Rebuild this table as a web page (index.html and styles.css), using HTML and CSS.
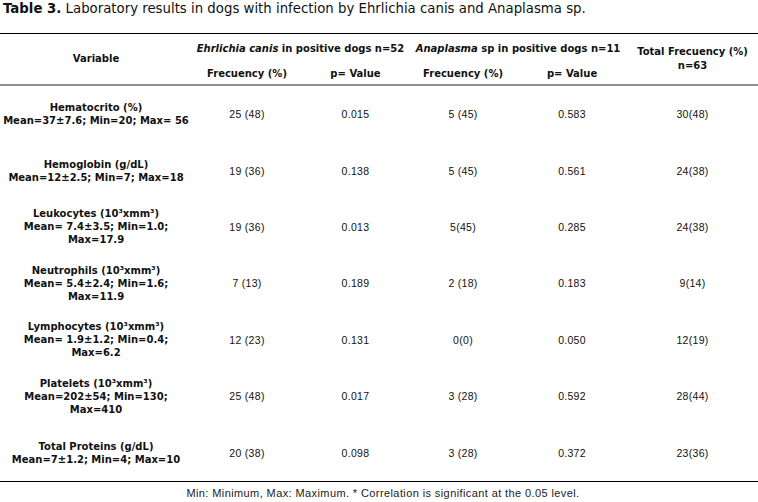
FILE: index.html
```html
<!DOCTYPE html>
<html lang="en">
<head>
<meta charset="utf-8">
<title>Table 3</title>
<link rel="stylesheet" href="styles.css">
</head>
<body>
<p class="title"><b>Table 3.</b> Laboratory results in dogs with infection by Ehrlichia canis and Anaplasma sp.</p>
<table class="results">
  <colgroup>
    <col class="c-var"><col class="c-f1"><col class="c-p1"><col class="c-f2"><col class="c-p2"><col class="c-tot">
  </colgroup>
  <thead>
    <tr class="h1">
      <th rowspan="2" class="var-head">Variable</th>
      <th colspan="2"><i>Ehrlichia canis</i> in positive dogs n=52</th>
      <th colspan="2"><i>Anaplasma</i> sp in positive dogs n=11</th>
      <th rowspan="2" class="tot-head">Total Frecuency (%)<br>n=63</th>
    </tr>
    <tr class="h2">
      <th>Frecuency (%)</th>
      <th>p= Value</th>
      <th>Frecuency (%)</th>
      <th>p= Value</th>
    </tr>
  </thead>
  <tbody>
    <tr>
      <td class="label">Hematocrito (%)<br>Mean=37±7.6; Min=20; Max= 56</td>
      <td>25 (48)</td><td>0.015</td><td>5 (45)</td><td>0.583</td><td>30(48)</td>
    </tr>
    <tr>
      <td class="label">Hemoglobin (g/dL)<br>Mean=12±2.5; Min=7; Max=18</td>
      <td>19 (36)</td><td>0.138</td><td>5 (45)</td><td>0.561</td><td>24(38)</td>
    </tr>
    <tr>
      <td class="label">Leukocytes (10³xmm³)<br>Mean= 7.4±3.5; Min=1.0;<br>Max=17.9</td>
      <td>19 (36)</td><td>0.013</td><td>5(45)</td><td>0.285</td><td>24(38)</td>
    </tr>
    <tr>
      <td class="label">Neutrophils (10³xmm³)<br>Mean= 5.4±2.4; Min=1.6;<br>Max=11.9</td>
      <td>7 (13)</td><td>0.189</td><td>2 (18)</td><td>0.183</td><td>9(14)</td>
    </tr>
    <tr>
      <td class="label">Lymphocytes (10³xmm³)<br>Mean= 1.9±1.2; Min=0.4;<br>Max=6.2</td>
      <td>12 (23)</td><td>0.131</td><td>0(0)</td><td>0.050</td><td>12(19)</td>
    </tr>
    <tr>
      <td class="label">Platelets (10³xmm³)<br>Mean=202±54; Min=130;<br>Max=410</td>
      <td>25 (48)</td><td>0.017</td><td>3 (28)</td><td>0.592</td><td>28(44)</td>
    </tr>
    <tr>
      <td class="label">Total Proteins (g/dL)<br>Mean=7±1.2; Min=4; Max=10</td>
      <td>20 (38)</td><td>0.098</td><td>3 (28)</td><td>0.372</td><td>23(36)</td>
    </tr>
  </tbody>
</table>
<p class="foot">Min: Minimum, Max: Maximum. * Correlation is significant at the 0.05 level.</p>
</body>
</html>
```

FILE: styles.css
```css
html, body {
  margin: 0;
  padding: 0;
  background: #fff;
  color: #000;
  font-family: "DejaVu Sans", Verdana, sans-serif;
}

.title {
  margin: 0;
  padding: 0 0 0 3px;
  height: 18px;
  line-height: 18px;
  font-size: 13.3px;
  color: #111;
}

.results {
  margin-top: 15px;
  width: 758px;
  border-collapse: collapse;
  table-layout: fixed;
  border-top: 1px solid #000;
  border-bottom: 1px solid #000;
}

.c-var { width: 192px; }
.c-f1 { width: 110px; }
.c-p1 { width: 107px; }
.c-f2 { width: 108px; }
.c-p2 { width: 110px; }
.c-tot { width: 131px; }

.results th {
  font-size: 10px;
  font-weight: bold;
  line-height: 14px;
  padding: 0;
  text-align: center;
  vertical-align: middle;
  color: #111;
}

.results .h1 th {
  height: 29px;
}

.results .h2 th {
  height: 21px;
  border-bottom: 2px solid #8e8e8e;
}

.results .var-head,
.results .tot-head {
  border-bottom: 2px solid #8e8e8e;
}

.results td {
  height: 56.4px;
  padding: 0;
  text-align: center;
  vertical-align: middle;
  font-family: "Liberation Sans", Arial, sans-serif;
  font-size: 10.5px;
  letter-spacing: 0.3px;
  color: #111;
}

.results td.label {
  font-family: "DejaVu Sans", Verdana, sans-serif;
  font-size: 10px;
  letter-spacing: 0;
  font-weight: bold;
  line-height: 13px;
}

.foot {
  margin: 5px 0 0;
  padding-left: 8px;
  text-align: center;
  font-family: "Liberation Sans", Arial, sans-serif;
  font-size: 11px;
  letter-spacing: 0.4px;
  line-height: 12px;
  color: #222;
}
```
